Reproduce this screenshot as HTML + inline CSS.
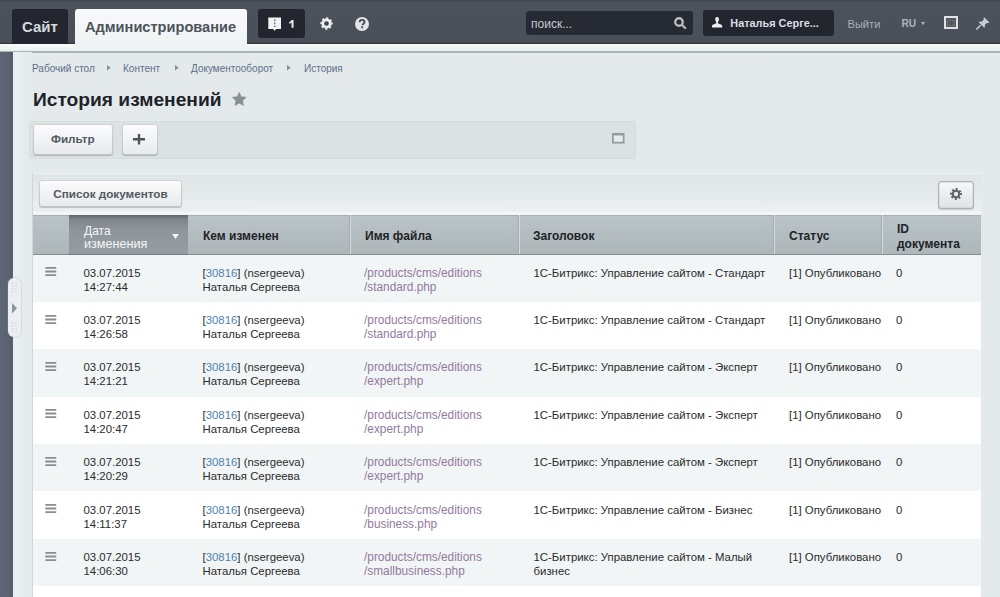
<!DOCTYPE html>
<html><head><meta charset="utf-8">
<style>
*{box-sizing:border-box;margin:0;padding:0}
html,body{width:1000px;height:597px;overflow:hidden}
body{position:relative;background:#e4eaeb;font-family:"Liberation Sans",sans-serif;color:#222}
.a{position:absolute}
svg{position:absolute;overflow:visible}
#top{left:0;top:0;width:1000px;height:44px;background:linear-gradient(#40444b,#4c525b 2.5px,#4a5059 40px,#464b53 42.5px,#30343a 43.5px)}
#strip{left:0;top:44px;width:1000px;height:7px;background:linear-gradient(#fbfcfc,#e8eeef)}
#line{left:0;top:51px;width:1000px;height:1.5px;background:#aab3b5}
#lside{left:0;top:52px;width:13px;height:545px;background:linear-gradient(90deg,#5e6574,#5b6271 9px,#535966 12px,#626875)}
.tab-site{left:12px;top:9px;width:56px;height:35px;background:#23262e;border-radius:3px 3px 0 0;color:#d5d9de;font-weight:bold;font-size:15px;line-height:35px;padding-left:10px}
.tab-adm{left:75px;top:9px;width:172px;height:42px;background:linear-gradient(#f8f9fa,#eef2f3);border-radius:3px 3px 0 0;color:#4d535b;font-weight:bold;font-size:14.6px;line-height:30px;padding-left:10px;padding-top:3.3px}
.notif{left:258px;top:9px;width:47px;height:29px;background:#23262e;border-radius:3px}
.search{left:526px;top:11px;width:167px;height:23.5px;background:#262a33;border-radius:3px;color:#c5c9ce;font-size:12px;line-height:26.5px;padding-left:5px}
.user{left:702.5px;top:10px;width:131.5px;height:25.7px;background:#23262e;border-radius:3px;color:#dcdfe3;font-weight:bold;font-size:10.9px;line-height:26.5px;padding-left:27.8px}
.toptxt{color:#a9aeb5;font-size:11.1px;line-height:14px}
.bc{top:62.5px;font-size:10px;color:#5e7088;line-height:12px}
.bca{top:64.6px;width:0;height:0;border-left:3.8px solid #868f97;border-top:2.9px solid transparent;border-bottom:2.9px solid transparent}
#title{left:33px;top:86.6px;font-size:19.2px;font-weight:bold;color:#1e232b;line-height:26px}
#fpanel{left:28.5px;top:121px;width:607.5px;height:37.5px;background:#dbe2e3;border-radius:3px;box-shadow:inset 0 0 0 1px #d6dddf}
.btn{background:linear-gradient(#fcfcfd,#e6e9eb);border-radius:3px;box-shadow:0 1px 1px rgba(0,0,0,.2),inset 0 0 0 1px rgba(0,0,0,.16);color:#535a63;font-weight:bold;font-size:11.7px;text-align:center}
#cont{left:33px;top:173px;width:948px;height:424px;background:#fff}
#tbar{left:33px;top:173px;width:948px;height:42px;background:linear-gradient(#f6f8f8,#e0e6e7 1.5px,#e4e9ea 18px,#ebeff0 38px,#f5f7f7 40px,#eef2f2)}
#thead{left:33px;top:214.5px;width:948px;height:40px;background:linear-gradient(#bac4c6,#adb7b9);border-top:1px solid #a6b0b1;border-bottom:1px solid #858e90}
.th{top:215px;height:39.5px;font-weight:bold;font-size:12px;color:#1e2329;line-height:13px}
.div{top:215px;width:2px;height:39px;border-left:1px solid #a4acb0;background:#d6dcdf}
.row{left:33px;width:948px;height:47.4px}
.light{background:#f1f5f6}
.white{background:#ffffff}
.cell{font-size:11.4px;line-height:14px;color:#2b2b2b;white-space:nowrap}
.lnk{color:#5083af}
.path{color:#927a9c;font-size:11.85px}
.ham{width:12px;height:9px}
.ham i{display:block;height:1.7px;background:#8d9398;margin-bottom:1.85px}
</style></head>
<body>
<div id="top" class="a"></div>
<div id="strip" class="a"></div>
<div id="line" class="a"></div>
<div id="lside" class="a"></div>
<div class="a" style="left:13px;top:52px;width:19px;height:545px;background:linear-gradient(90deg,#e9eef0,#eaeff0 5px,#e5eaec 12px)"></div>

<div class="a tab-site">Сайт</div>
<div class="a tab-adm">Администрирование</div>
<div class="a notif"></div>
<svg style="left:268px;top:17px" width="14" height="14" viewBox="0 0 14 14">
 <path d="M0.3 0.5h12.7v11.5h-4.8l-1.6 1.8-1.6-1.8h-4.7z" fill="#f2f3f4"/>
 <rect x="6" y="2.5" width="1.4" height="1.6" fill="#6b6f76"/>
 <rect x="6" y="5.5" width="1.4" height="1.6" fill="#6b6f76"/>
 <rect x="6" y="8.5" width="1.4" height="1.6" fill="#6b6f76"/>
</svg>
<svg style="left:288.8px;top:20px" width="5" height="8" viewBox="0 0 5 8"><path d="M2.6 0h1.9v7.8h-1.9v-5.2c-0.6 0.5-1.4 0.9-2.4 1.1v-1.6c1.1-0.3 1.9-1.1 2.4-2.1z" fill="#eef0f2"/></svg>
<svg style="left:319.5px;top:16.8px" width="13" height="13" viewBox="-6.5 -6.5 13 13">
 <circle r="5" fill="#eceef0"/>
 <circle r="5.3" fill="none" stroke="#eceef0" stroke-width="1.7" stroke-dasharray="2.2 1.96" transform="rotate(-12)"/>
 <circle r="2.3" fill="#3d4149"/>
</svg>
<svg style="left:354.5px;top:17px" width="14" height="14" viewBox="0 0 14 14">
 <circle cx="7" cy="7" r="7" fill="#e3e5e8"/>
 <path d="M4.6 5.3c0-1.5 1.1-2.4 2.5-2.4s2.4 0.9 2.4 2.1c0 1.6-1.9 1.7-1.9 3.2" fill="none" stroke="#464b53" stroke-width="1.9"/>
 <rect x="6.2" y="9.4" width="1.9" height="1.9" fill="#464b53"/>
</svg>
<div class="a search">поиск...</div>
<svg style="left:673.5px;top:17.2px" width="14" height="14" viewBox="0 0 14 14">
 <circle cx="5" cy="5" r="3.75" fill="none" stroke="#b9bdc2" stroke-width="2.3"/>
 <path d="M8 8l3.2 3" stroke="#b9bdc2" stroke-width="2.3" stroke-linecap="round"/>
</svg>
<div class="a user">Наталья Серге...</div>
<svg style="left:711.5px;top:16.6px" width="10.2" height="10.5" viewBox="0 0 10.2 10.5">
 <path d="M5.1 0c1.2 0 1.8 0.9 1.8 2.1 0 1.4-0.5 2.6-1 3.3v0.8l3.5 1.5c0.6 0.3 0.8 0.6 0.8 1.3v1.5h-10.2v-1.5c0-0.7 0.2-1 0.8-1.3l3.5-1.5v-0.8c-0.5-0.7-1-1.9-1-3.3 0-1.2 0.6-2.1 1.8-2.1z" fill="#eef0f2"/>
</svg>
<div class="a toptxt" style="left:847.5px;top:16.8px">Выйти</div>
<div class="a toptxt" style="left:901.5px;top:17px;font-weight:bold;font-size:10.2px;color:#b0b5bb">RU</div>
<svg style="left:920.5px;top:21.5px" width="4" height="3" viewBox="0 0 4 3"><path d="M0 0h4l-2 3z" fill="#b0b5bb"/></svg>
<svg style="left:943.7px;top:16px" width="14" height="13" viewBox="0 0 14 13">
 <rect x="1" y="1" width="12" height="11" fill="#53585f" stroke="#e6e8ea" stroke-width="1.9"/>
 <rect x="3.2" y="4.6" width="7.6" height="4.8" fill="none" stroke="#80858b" stroke-width="0.9" stroke-dasharray="1 0.6"/>
</svg>
<svg style="left:976px;top:17px" width="14" height="13" viewBox="0 0 14 13">
 <path d="M8.2 0.3l5.3 5.3-1.3 0.6-1.2-0.5-2.2 2.2c0.4 1 0.2 2.1-0.6 2.9l-5.4-5.4c0.8-0.8 1.9-1 2.9-0.6l2.2-2.2-0.5-1.2z" fill="#c9cdd2"/>
 <path d="M4.6 8.2l-4.3 4.3" stroke="#c9cdd2" stroke-width="1.5"/>
</svg>

<div class="a bc" style="left:32px">Рабочий стол</div>
<svg style="left:107.2px;top:64.7px" width="4" height="6" viewBox="0 0 4 6"><path d="M0 0L3.7 2.8 0 5.6z" fill="#858e96"/></svg>
<div class="a bc" style="left:123px">Контент</div>
<svg style="left:175.2px;top:64.7px" width="4" height="6" viewBox="0 0 4 6"><path d="M0 0L3.7 2.8 0 5.6z" fill="#858e96"/></svg>
<div class="a bc" style="left:191px">Документооборот</div>
<svg style="left:287.2px;top:64.7px" width="4" height="6" viewBox="0 0 4 6"><path d="M0 0L3.7 2.8 0 5.6z" fill="#858e96"/></svg>
<div class="a bc" style="left:304px">История</div>

<div id="title" class="a">История изменений</div>
<svg style="left:231.7px;top:92px" width="14.5" height="14.5" viewBox="0 0 24 24">
 <path d="M12.00 0.60 L15.47 7.83 L23.41 8.89 L17.61 14.42 L19.05 22.31 L12.00 18.50 L4.95 22.31 L6.39 14.42 L0.59 8.89 L8.53 7.83z" fill="#8a8f94" stroke="#8a8f94" stroke-width="1" stroke-linejoin="round"/>
</svg>

<div id="fpanel" class="a"></div>
<div class="a btn" style="left:32.5px;top:124px;width:80.5px;height:30.5px;line-height:29.6px">Фильтр</div>
<div class="a btn" style="left:121.5px;top:124px;width:36px;height:30.5px"></div>
<svg style="left:133px;top:134px" width="12" height="10.5" viewBox="0 0 12 10.5">
 <path d="M4.85 0h2.3v4.1h4.85v2.3h-4.85v4.1h-2.3v-4.1h-4.85v-2.3h4.85z" fill="#4e545c"/>
</svg>
<svg style="left:611.5px;top:133.2px" width="12.5" height="10.5" viewBox="0 0 12.5 10.5">
 <rect x="0.85" y="0.85" width="10.8" height="8.8" fill="#e9ecee" stroke="#939a9e" stroke-width="1.7"/>
 <rect x="0.85" y="0.85" width="10.8" height="1.6" fill="#939a9e"/>
</svg>

<div id="cont" class="a"></div>
<div id="tbar" class="a"></div>
<div class="a btn" style="left:39px;top:180px;width:143px;height:27px;line-height:27.3px">Список документов</div>
<div class="a btn" style="left:937.5px;top:180.5px;width:36.5px;height:28px;background:linear-gradient(#f6f7f8,#dfe3e5);box-shadow:0 1px 1px rgba(0,0,0,.15),inset 0 0 0 1.2px #acb2b6"></div>
<svg style="left:950px;top:188px" width="12" height="12" viewBox="-6 -6 12 12">
 <circle r="4.3" fill="#5d636a"/>
 <circle r="4.9" fill="none" stroke="#5d636a" stroke-width="2.1" stroke-dasharray="1.9 1.95" transform="rotate(-11)"/>
 <circle r="2.2" fill="#e8ebed"/>
</svg>

<div id="thead" class="a"></div>
<div class="a" style="left:69px;top:214.5px;width:119px;height:40px;background:linear-gradient(#5f676d,#7d858b 10%,#8e959b 40%,#969da2);border-bottom:1px solid #737b80"></div>
<div class="a th" style="left:84px;top:225px;color:#f4f6f7;font-weight:normal;line-height:12.8px">Дата<br><span style="font-size:12.6px">изменения</span></div>
<svg style="left:172px;top:234px" width="7" height="5" viewBox="0 0 7 5"><path d="M0 0h7l-3.5 5z" fill="#f2f4f5"/></svg>
<div class="a div" style="left:349px"></div>
<div class="a div" style="left:518px"></div>
<div class="a div" style="left:773px"></div>
<div class="a div" style="left:881px"></div>
<div class="a th" style="left:203px;top:230px">Кем изменен</div>
<div class="a th" style="left:365px;top:230px">Имя файла</div>
<div class="a th" style="left:533px;top:230px">Заголовок</div>
<div class="a th" style="left:789px;top:230px">Статус</div>
<div class="a th" style="left:897px;top:222.4px;line-height:14.5px">ID<br>документа</div>

<div class="a" style="left:8px;top:277.5px;width:12.5px;height:59px;border-radius:6px;background:#eceff1;box-shadow:0 0 0 1px rgba(150,160,170,.22)"></div>
<svg style="left:8px;top:277.5px" width="13" height="59" viewBox="0 0 13 59">
 <g fill="#c3c9cd">
 <circle cx="4.5" cy="5" r="0.7"/><circle cx="8" cy="5" r="0.7"/>
 <circle cx="4.5" cy="8" r="0.7"/><circle cx="8" cy="8" r="0.7"/>
 <circle cx="4.5" cy="11" r="0.7"/><circle cx="8" cy="11" r="0.7"/>
 <circle cx="4.5" cy="14" r="0.7"/><circle cx="8" cy="14" r="0.7"/>
 <circle cx="4.5" cy="45" r="0.7"/><circle cx="8" cy="45" r="0.7"/>
 <circle cx="4.5" cy="48" r="0.7"/><circle cx="8" cy="48" r="0.7"/>
 <circle cx="4.5" cy="51" r="0.7"/><circle cx="8" cy="51" r="0.7"/>
 <circle cx="4.5" cy="54" r="0.7"/><circle cx="8" cy="54" r="0.7"/>
 </g>
</svg>
<svg style="left:12px;top:303px" width="5" height="10.5" viewBox="0 0 5 10.5"><path d="M0 0l5 5.25-5 5.25z" fill="#8e959b"/></svg>
<div class="a" style="left:32px;top:173px;width:1px;height:424px;background:#d0d6d9"></div>

<div class="a row light" style="top:254.50px"></div>
<svg style="left:44.5px;top:267.10px" width="11.5" height="9" viewBox="0 0 11.5 9"><path d="M1 0.95h9.5M1 4.5h9.5M1 8.05h9.5" stroke="#878d93" stroke-width="1.8" stroke-linecap="round"/></svg>
<div class="a cell" style="left:83.5px;top:265.60px">03.07.2015<br>14:27:44</div>
<div class="a cell" style="left:202.5px;top:265.60px">[<span class="lnk">30816</span>] (nsergeeva)<br>Наталья Сергеева</div>
<div class="a cell path" style="left:364px;top:265.60px">/products/cms/editions<br>/standard.php</div>
<div class="a cell" style="left:533.5px;top:265.60px">1С-Битрикс: Управление сайтом - Стандарт</div>
<div class="a cell" style="left:789px;top:265.60px">[1] Опубликовано</div>
<div class="a cell" style="left:896px;top:265.60px">0</div>
<div class="a row white" style="top:301.90px"></div>
<svg style="left:44.5px;top:314.50px" width="11.5" height="9" viewBox="0 0 11.5 9"><path d="M1 0.95h9.5M1 4.5h9.5M1 8.05h9.5" stroke="#878d93" stroke-width="1.8" stroke-linecap="round"/></svg>
<div class="a cell" style="left:83.5px;top:313.00px">03.07.2015<br>14:26:58</div>
<div class="a cell" style="left:202.5px;top:313.00px">[<span class="lnk">30816</span>] (nsergeeva)<br>Наталья Сергеева</div>
<div class="a cell path" style="left:364px;top:313.00px">/products/cms/editions<br>/standard.php</div>
<div class="a cell" style="left:533.5px;top:313.00px">1С-Битрикс: Управление сайтом - Стандарт</div>
<div class="a cell" style="left:789px;top:313.00px">[1] Опубликовано</div>
<div class="a cell" style="left:896px;top:313.00px">0</div>
<div class="a row light" style="top:349.30px"></div>
<svg style="left:44.5px;top:361.90px" width="11.5" height="9" viewBox="0 0 11.5 9"><path d="M1 0.95h9.5M1 4.5h9.5M1 8.05h9.5" stroke="#878d93" stroke-width="1.8" stroke-linecap="round"/></svg>
<div class="a cell" style="left:83.5px;top:360.40px">03.07.2015<br>14:21:21</div>
<div class="a cell" style="left:202.5px;top:360.40px">[<span class="lnk">30816</span>] (nsergeeva)<br>Наталья Сергеева</div>
<div class="a cell path" style="left:364px;top:360.40px">/products/cms/editions<br>/expert.php</div>
<div class="a cell" style="left:533.5px;top:360.40px">1С-Битрикс: Управление сайтом - Эксперт</div>
<div class="a cell" style="left:789px;top:360.40px">[1] Опубликовано</div>
<div class="a cell" style="left:896px;top:360.40px">0</div>
<div class="a row white" style="top:396.70px"></div>
<svg style="left:44.5px;top:409.30px" width="11.5" height="9" viewBox="0 0 11.5 9"><path d="M1 0.95h9.5M1 4.5h9.5M1 8.05h9.5" stroke="#878d93" stroke-width="1.8" stroke-linecap="round"/></svg>
<div class="a cell" style="left:83.5px;top:407.80px">03.07.2015<br>14:20:47</div>
<div class="a cell" style="left:202.5px;top:407.80px">[<span class="lnk">30816</span>] (nsergeeva)<br>Наталья Сергеева</div>
<div class="a cell path" style="left:364px;top:407.80px">/products/cms/editions<br>/expert.php</div>
<div class="a cell" style="left:533.5px;top:407.80px">1С-Битрикс: Управление сайтом - Эксперт</div>
<div class="a cell" style="left:789px;top:407.80px">[1] Опубликовано</div>
<div class="a cell" style="left:896px;top:407.80px">0</div>
<div class="a row light" style="top:444.10px"></div>
<svg style="left:44.5px;top:456.70px" width="11.5" height="9" viewBox="0 0 11.5 9"><path d="M1 0.95h9.5M1 4.5h9.5M1 8.05h9.5" stroke="#878d93" stroke-width="1.8" stroke-linecap="round"/></svg>
<div class="a cell" style="left:83.5px;top:455.20px">03.07.2015<br>14:20:29</div>
<div class="a cell" style="left:202.5px;top:455.20px">[<span class="lnk">30816</span>] (nsergeeva)<br>Наталья Сергеева</div>
<div class="a cell path" style="left:364px;top:455.20px">/products/cms/editions<br>/expert.php</div>
<div class="a cell" style="left:533.5px;top:455.20px">1С-Битрикс: Управление сайтом - Эксперт</div>
<div class="a cell" style="left:789px;top:455.20px">[1] Опубликовано</div>
<div class="a cell" style="left:896px;top:455.20px">0</div>
<div class="a row white" style="top:491.50px"></div>
<svg style="left:44.5px;top:504.10px" width="11.5" height="9" viewBox="0 0 11.5 9"><path d="M1 0.95h9.5M1 4.5h9.5M1 8.05h9.5" stroke="#878d93" stroke-width="1.8" stroke-linecap="round"/></svg>
<div class="a cell" style="left:83.5px;top:502.60px">03.07.2015<br>14:11:37</div>
<div class="a cell" style="left:202.5px;top:502.60px">[<span class="lnk">30816</span>] (nsergeeva)<br>Наталья Сергеева</div>
<div class="a cell path" style="left:364px;top:502.60px">/products/cms/editions<br>/business.php</div>
<div class="a cell" style="left:533.5px;top:502.60px">1С-Битрикс: Управление сайтом - Бизнес</div>
<div class="a cell" style="left:789px;top:502.60px">[1] Опубликовано</div>
<div class="a cell" style="left:896px;top:502.60px">0</div>
<div class="a row light" style="top:538.90px"></div>
<svg style="left:44.5px;top:551.50px" width="11.5" height="9" viewBox="0 0 11.5 9"><path d="M1 0.95h9.5M1 4.5h9.5M1 8.05h9.5" stroke="#878d93" stroke-width="1.8" stroke-linecap="round"/></svg>
<div class="a cell" style="left:83.5px;top:550.00px">03.07.2015<br>14:06:30</div>
<div class="a cell" style="left:202.5px;top:550.00px">[<span class="lnk">30816</span>] (nsergeeva)<br>Наталья Сергеева</div>
<div class="a cell path" style="left:364px;top:550.00px">/products/cms/editions<br>/smallbusiness.php</div>
<div class="a cell" style="left:533.5px;top:550.00px">1С-Битрикс: Управление сайтом - Малый<br>бизнес</div>
<div class="a cell" style="left:789px;top:550.00px">[1] Опубликовано</div>
<div class="a cell" style="left:896px;top:550.00px">0</div>
<div class="a row white" style="top:586.30px"></div>
</body></html>
